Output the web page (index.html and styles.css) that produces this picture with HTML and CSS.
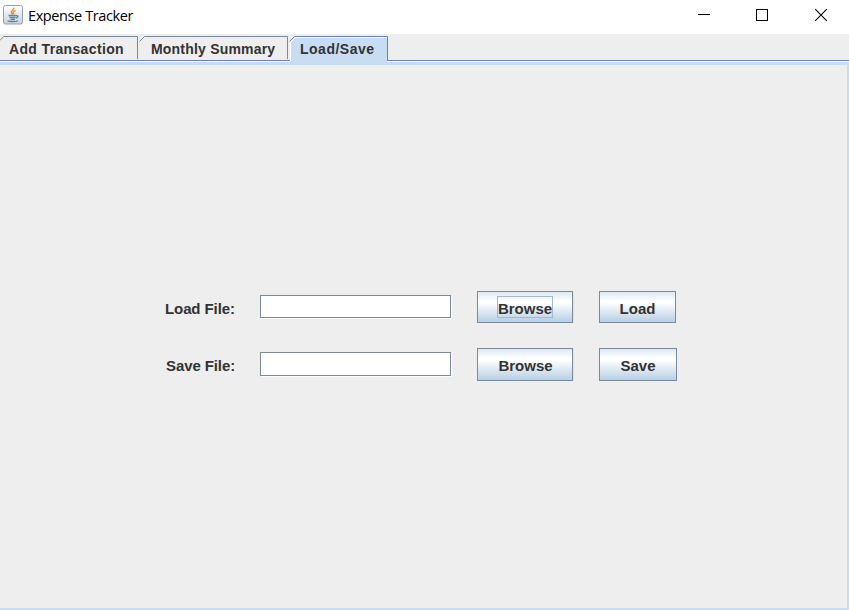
FILE: index.html
```
<!DOCTYPE html>
<html lang="en">
<head>
<meta charset="utf-8">
<title>Expense Tracker</title>
<link rel="stylesheet" href="styles.css">
</head>
<body>
<div class="window">
  <header class="titlebar">
    <svg class="app-icon" width="20" height="20" viewBox="0 0 20 20">
      <defs><linearGradient id="plate" x1="0" y1="0" x2="0" y2="1"><stop offset="0" stop-color="#fff"/><stop offset="1" stop-color="#c9d3da"/></linearGradient></defs>
      <rect x=".5" y=".5" width="19" height="18.5" rx="2" fill="url(#plate)" stroke="#8f9fab"/>
      <path d="M10.700 2.800c.8 2-3.500 3-2.200 5.100l1 1.600M12.500 5.300c-2 1-2.900 1.800-1.700 3.900" fill="none" stroke="#ed8a3a" stroke-width="1.500"/>
      <path d="M5.500 10.500h8M6.500 12.500h6M7.500 14.500h4.500M13.500 10.800c2.200-.7 2 1.700-.5 2.200M4.500 15.700c1.500 1.300 8.500 1.300 10.500 0" fill="none" stroke="#5e86a3" stroke-width="1.300"/>
    </svg>
    <h1 class="title">Expense Tracker</h1>
    <svg class="controls" width="130" height="14" viewBox="0 0 130 14">
      <path d="M0 6.500h12M58.500 1.500h11v11h-11z" fill="none" stroke="#000" shape-rendering="crispEdges"/>
      <path d="M117.200 1.200l11.600 11.600M128.800 1.200l-11.600 11.600" fill="none" stroke="#000" stroke-width="1.100"/>
    </svg>
  </header>
  <nav class="tabs">
    <div class="tab tab-add">
      <svg class="edge" width="138" height="25"><path d="M0 4.500L3.500 .5H137.500V23"/></svg>
      <span class="tab-text">Add Transaction</span>
    </div>
    <div class="tab tab-summary">
      <svg class="edge" width="150" height="25"><path d="M1.500 5.500L6.500 .5H149.500V23"/></svg>
      <span class="tab-text">Monthly Summary</span>
    </div>
    <div class="tab tab-files active">
      <svg class="edge" width="101" height="26"><path class="fill" d="M2 26V6L7 1H99V26z"/><path class="shine" d="M2.500 25V6.500L7.500 1.500H99"/><path d="M1.500 5.500L6.500 .5H99.500V25"/></svg>
      <span class="tab-text">Load/Save</span>
    </div>
  </nav>
  <main class="panel">
    <form class="files">
      <label class="label" for="load">Load File:</label>
      <input class="field" id="load" type="text">
      <button class="button browse" type="button"><span class="focus">Browse</span></button>
      <button class="button load" type="button">Load</button>
      <label class="label save-label" for="save">Save File:</label>
      <input class="field tall" id="save" type="text">
      <button class="button browse second" type="button">Browse</button>
      <button class="button second" type="button">Save</button>
    </form>
  </main>
</div>
</body>
</html>
```
FILE: styles.css
```
* { box-sizing: border-box; }
body { margin: 0; background: #eee; font-family: "Liberation Sans", Arial, sans-serif; color: #333; }
.window { width: 849px; height: 610px; display: flex; flex-direction: column; overflow: hidden; }
.titlebar { height: 34px; flex: none; display: flex; align-items: flex-start; background: #fff; padding: 5px 21px 0 3px; }
.title { margin: 0 0 0 5px; font: 400 14.500px/21px "Open Sans", "Noto Sans", sans-serif; color: #000; letter-spacing: -.4px; white-space: nowrap; }
.controls { margin: 3px 0 0 auto; }
.tabs { height: 27px; flex: none; display: flex; padding-top: 2px; border-bottom: 1px solid #6382bf; }
.tab { position: relative; height: 25px; font-size: 14px; font-weight: 700; line-height: 27px; white-space: nowrap; }
.tab-add { width: 138px; padding-left: 9px; letter-spacing: .35px; }
.tab-summary { width: 150px; padding-left: 13px; letter-spacing: .2px; }
.tab-files { width: 101px; padding-left: 12px; letter-spacing: .5px; }
.edge { position: absolute; left: 0; top: 0; fill: none; stroke: #7a8a99; }
.active { z-index: 1; }
.active .edge { stroke: #6382bf; }
.edge .fill { fill: #c8ddf2; stroke: none; }
.edge .shine { stroke: #fff; }
.tab-text { position: relative; }
.panel { flex: 1; border: solid #c8ddf2; border-width: 3px 2px 2px 0; box-shadow: 0 -1px #fff; margin-top: 1px; padding: 226px 0 0 165px; }
.files { display: grid; grid-template-columns: 70px 192px 97px 78px; grid-template-rows: 32px 33px; column-gap: 25px; row-gap: 25px; align-items: center; margin: 0; }
.label { font-size: 15px; font-weight: 700; line-height: 18px; white-space: nowrap; letter-spacing: -.1px; padding-top: 3px; }
.save-label { padding-left: 1px; }
.field { width: 191px; height: 23px; margin: 0 0 1px; padding: 0 4px; border: 1px solid #7a8a99; border-radius: 0; background: #fff; box-shadow: 1px 1px #fff; outline: 0; font: 15px "Liberation Sans", sans-serif; }
.field.tall { height: 24px; }
.button { height: 100%; width: 78px; margin: 0; padding: 4px 0 0; border: 1px solid #7a8a99; border-radius: 0; background: linear-gradient(#dde8f3 0, #fff 30%, #fff 35%, #b8cfe5 100%); font: 700 15px/20px "Liberation Sans", sans-serif; color: #333; }
.button.browse { width: 96px; padding-left: 1px; box-shadow: 1px 0 #dbe5ef; }
.button.load { width: 77px; }
.button.second { padding-top: 2px; }
.focus { display: inline-block; width: 56px; height: 22px; line-height: 25px; margin: -6px 2px 0 0; padding-left: 1px; outline: 1px solid #a3b8cc; outline-offset: -1px; }
```
